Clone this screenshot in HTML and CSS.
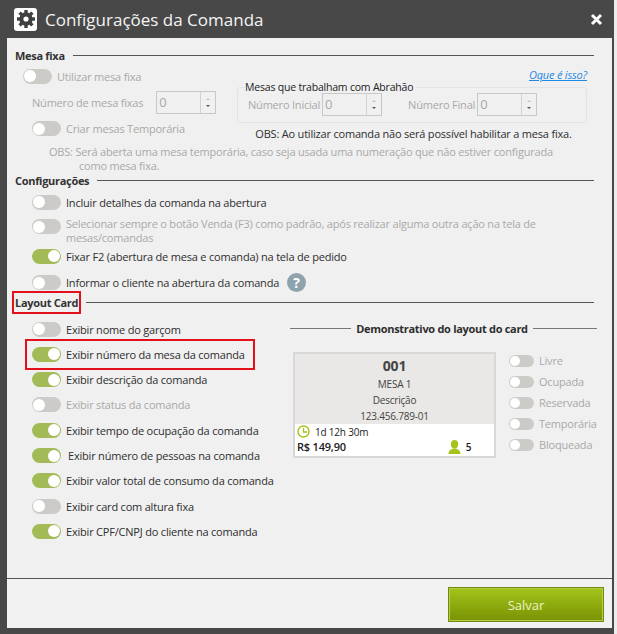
FILE: index.html
```html
<!DOCTYPE html>
<html lang="pt-BR">
<head>
    <meta charset="UTF-8">
    <meta name="viewport" content="width=device-width, initial-scale=1.0">
    <title>Configurações da Comanda</title>
    <link rel="stylesheet" href="styles.css">
</head>
<body>
    <div class="dialog">
        <div class="dialog-header">
            <span class="gear-box">
                <svg width="20" height="20" viewBox="0 0 20 20">
                    <g stroke="#3f3f3f" stroke-width="3.4">
                        <line x1="10" y1="1" x2="10" y2="19"/>
                        <line x1="1" y1="10" x2="19" y2="10"/>
                        <line x1="3.6" y1="3.6" x2="16.4" y2="16.4"/>
                        <line x1="16.4" y1="3.6" x2="3.6" y2="16.4"/>
                    </g>
                    <circle cx="10" cy="10" r="5" fill="none" stroke="#3f3f3f" stroke-width="3.4"/>
                    <circle cx="10" cy="10" r="2.6" fill="#fff"/>
                </svg>
            </span>
            <h1>Configurações da Comanda</h1>
            <svg class="close-icon" width="13" height="13" viewBox="0 0 13 13">
                <path d="M2 2 L11 11 M11 2 L2 11" stroke="#fff" stroke-width="3" fill="none"/>
            </svg>
        </div>

        <div class="dialog-body">
            <div class="section-title"><span>Mesa fixa</span></div>
            <div class="mesa-grid">
                <div class="mesa-left">
                    <div class="row row-first off-text">
                        <span class="toggle"></span>
                        <span>Utilizar mesa fixa</span>
                    </div>
                    <div class="field off-text">
                        <span>Número de mesa fixas</span>
                        <span class="spin"><span class="spin-value">0</span><span class="spin-arrows"><i class="up"></i><i class="down"></i></span></span>
                    </div>
                    <div class="row row-criar off-text">
                        <span class="toggle"></span>
                        <span>Criar mesas Temporária</span>
                    </div>
                </div>
                <div class="mesa-right">
                    <a class="help-link" href="#">Oque é isso?</a>
                    <fieldset class="range-box">
                        <legend>Mesas que trabalham com Abrahão</legend>
                        <div class="range-fields off-text">
                            <span>Número Inicial</span>
                            <span class="spin"><span class="spin-value">0</span><span class="spin-arrows"><i class="up"></i><i class="down"></i></span></span>
                            <span class="range-second">Número Final</span>
                            <span class="spin"><span class="spin-value">0</span><span class="spin-arrows"><i class="up"></i><i class="down"></i></span></span>
                        </div>
                    </fieldset>
                    <p class="obs-dark">OBS: Ao utilizar comanda não será possível habilitar a mesa fixa.</p>
                </div>
            </div>
            <p class="obs-light off-text">OBS: Será aberta uma mesa temporária, caso seja usada uma numeração que não estiver configurada como mesa fixa.</p>

            <div class="section-title"><span>Configurações</span></div>
            <div class="config-list">
                <div class="row row-short">
                    <span class="toggle"></span>
                    <span>Incluir detalhes da comanda na abertura</span>
                </div>
                <div class="row row-tall off-text">
                    <span class="toggle"></span>
                    <span class="wrap-label">Selecionar sempre o botão Venda (F3) como padrão, após realizar alguma outra ação na tela de mesas/comandas</span>
                </div>
                <div class="row">
                    <span class="toggle on"></span>
                    <span>Fixar F2 (abertura de mesa e comanda) na tela de pedido</span>
                </div>
                <div class="row row-help">
                    <span class="toggle"></span>
                    <span>Informar o cliente na abertura da comanda</span>
                    <span class="help-icon">?</span>
                </div>
            </div>

            <div class="section-title section-layout"><span class="marked">Layout Card</span></div>
            <div class="layout-grid">
                <div class="layout-list">
                    <div class="row">
                        <span class="toggle"></span>
                        <span>Exibir nome do garçom</span>
                    </div>
                    <div class="row row-marked">
                        <span class="toggle on"></span>
                        <span>Exibir número da mesa da comanda</span>
                    </div>
                    <div class="row">
                        <span class="toggle on"></span>
                        <span>Exibir descrição da comanda</span>
                    </div>
                    <div class="row off-text">
                        <span class="toggle"></span>
                        <span>Exibir status da comanda</span>
                    </div>
                    <div class="row">
                        <span class="toggle on"></span>
                        <span>Exibir tempo de ocupação da comanda</span>
                    </div>
                    <div class="row">
                        <span class="toggle on"></span>
                        <span class="nudge">Exibir número de pessoas na comanda</span>
                    </div>
                    <div class="row">
                        <span class="toggle on"></span>
                        <span>Exibir valor total de consumo da comanda</span>
                    </div>
                    <div class="row">
                        <span class="toggle"></span>
                        <span>Exibir card com altura fixa</span>
                    </div>
                    <div class="row">
                        <span class="toggle on"></span>
                        <span>Exibir CPF/CNPJ do cliente na comanda</span>
                    </div>
                </div>

                <div class="demo">
                    <div class="demo-title"><span>Demonstrativo do layout do card</span></div>
                    <div class="demo-content">
                        <div class="card">
                            <div class="card-top">
                                <div class="card-number">001</div>
                                <div>MESA 1</div>
                                <div>Descrição</div>
                                <div>123.456.789-01</div>
                            </div>
                            <div class="card-bottom">
                                <div class="card-time">
                                    <svg width="13" height="13" viewBox="0 0 13 13">
                                        <circle cx="6.5" cy="6.5" r="5.5" fill="none" stroke="#a4c31c" stroke-width="1.4"/>
                                        <path d="M6.5 3 V7 H10" fill="none" stroke="#a4c31c" stroke-width="1.3"/>
                                    </svg>
                                    <span>1d 12h 30m</span>
                                </div>
                                <div class="card-total">
                                    <span class="card-price">R$ 149,90</span>
                                    <span class="card-people">
                                        <svg width="13" height="14" viewBox="0 0 13 14">
                                            <ellipse cx="6.5" cy="4.2" rx="3.6" ry="4.2" fill="#a4c31c"/>
                                            <path d="M0.5 14 C0.5 10.5 3 9.6 5 8.6 H8 C10 9.6 12.5 10.5 12.5 14 Z" fill="#a4c31c"/>
                                        </svg>
                                        <span>5</span>
                                    </span>
                                </div>
                            </div>
                        </div>
                        <div class="status-list off-text">
                            <div class="status"><span class="toggle small"></span><span>Livre</span></div>
                            <div class="status"><span class="toggle small"></span><span>Ocupada</span></div>
                            <div class="status"><span class="toggle small"></span><span>Reservada</span></div>
                            <div class="status"><span class="toggle small"></span><span>Temporária</span></div>
                            <div class="status"><span class="toggle small"></span><span>Bloqueada</span></div>
                        </div>
                    </div>
                </div>
            </div>
        </div>

        <div class="dialog-footer">
            <button class="save-btn">Salvar</button>
        </div>
    </div>
</body>
</html>
```

FILE: styles.css
```css
* {
    margin: 0;
    padding: 0;
    box-sizing: border-box;
}

body {
    width: 617px;
    height: 634px;
    overflow: hidden;
    background: #ececec;
    font-family: "Open Sans", "Noto Sans", sans-serif;
    font-size: 11px;
    letter-spacing: -0.2px;
    color: #2e2e2e;
}

.dialog {
    width: 614px;
    height: 634px;
    background: #484848;
    padding: 0 2px 6px 7px;
    display: flex;
    flex-direction: column;
}

.dialog-header {
    height: 38px;
    display: flex;
    align-items: center;
    padding-left: 7px;
    flex-shrink: 0;
}

.gear-box {
    width: 23px;
    height: 23px;
    background: #fff;
    border-radius: 3px;
    display: flex;
    align-items: center;
    justify-content: center;
}

.dialog-header h1 {
    font-size: 17px;
    font-weight: 400;
    letter-spacing: 0;
    color: #f4f4f4;
    margin-left: 8px;
}

.close-icon {
    margin-left: auto;
    margin-right: 9px;
}

.dialog-body {
    flex: 1;
    background: #f0f0f0;
    padding: 9px 18px 0 8px;
    border-bottom: 1px solid #555;
}

.section-title {
    height: 16px;
    display: flex;
    align-items: center;
    font-weight: 700;
    letter-spacing: -0.3px;
    color: #333;
}

.section-title::after {
    content: "";
    flex: 1;
    border-top: 1px solid #555;
    margin-left: 8px;
}

.section-layout {
    margin-top: -2px;
}

.marked {
    padding: 1px 0;
    outline: 2px solid #e3101c;
    outline-offset: 1px;
}

.off-text {
    color: #a9a9a9;
}

.row {
    height: 25.4px;
    display: flex;
    align-items: center;
    gap: 5px;
    padding-left: 17px;
}

.toggle {
    width: 29px;
    height: 15px;
    border-radius: 8px;
    background: #cccbc8;
    flex-shrink: 0;
    display: flex;
    align-items: center;
    padding: 0 1px;
}

.toggle::after {
    content: "";
    width: 12px;
    height: 12px;
    border-radius: 50%;
    background: #fff;
}

.toggle.on {
    background: #a3bb56;
    justify-content: flex-end;
}

.toggle.small {
    width: 25px;
    height: 12px;
}

.toggle.small::after {
    width: 10px;
    height: 10px;
}

.mesa-grid {
    display: flex;
}

.mesa-left {
    width: 222px;
    flex-shrink: 0;
}

.mesa-left .row-first {
    padding-left: 8px;
    height: 26px;
}

.mesa-left .row-criar {
    height: 27px;
}

.field {
    height: 26px;
    display: flex;
    align-items: center;
    gap: 13px;
    padding-left: 17px;
}

.spin {
    width: 60px;
    height: 23px;
    border: 1px solid #c8c8c8;
    display: flex;
    font-size: 13px;
    color: #a8a8a8;
    flex-shrink: 0;
}

.spin-value {
    flex: 1;
    padding-left: 2px;
    line-height: 20px;
}

.spin-arrows {
    width: 15px;
    border-left: 1px solid #d2d2d2;
    display: flex;
    flex-direction: column;
    align-items: center;
    justify-content: center;
    gap: 5px;
}

.spin-arrows i {
    border-left: 2px solid transparent;
    border-right: 2px solid transparent;
}

.spin-arrows .up {
    border-bottom: 2px solid #c4c4c4;
}

.spin-arrows .down {
    border-top: 2px solid #555;
}

.mesa-right {
    flex: 1;
    display: flex;
    flex-direction: column;
    padding-right: 7px;
}

.help-link {
    align-self: flex-end;
    color: #1e88e5;
    font-style: italic;
    height: 14px;
    line-height: 14px;
    margin-top: 5px;
}

.range-box {
    border: 1px solid #e2e4e6;
    border-radius: 3px;
    height: 42px;
    padding: 0 10px;
    margin-top: -1px;
}

.range-box legend {
    color: #222;
    font-size: 10.5px;
    margin-left: -3px;
    padding-right: 3px;
    line-height: 12px;
}

.range-fields {
    display: flex;
    align-items: center;
    gap: 2px;
    height: 22px;
}

.range-second {
    margin-left: 24px;
}

.obs-dark {
    text-align: center;
    margin-top: 4px;
    padding-left: 3px;
    line-height: 14px;
}

.obs-light {
    margin-top: 3px;
    margin-bottom: -1px;
    padding-left: 64px;
    padding-right: 30px;
    text-indent: -30px;
    line-height: 14px;
}

.config-list {
    margin-top: 2px;
}

.row-short {
    height: 24.4px;
}

.layout-grid {
    display: flex;
    margin-top: 5.6px;
}

.row-tall {
    height: 29px;
    align-items: flex-start;
}

.row-tall .toggle {
    margin-top: 5px;
}

.wrap-label {
    padding-top: 3px;
    line-height: 14px;
    width: 515px;
}

.row-help {
    height: 28px;
}

.help-icon {
    width: 19px;
    height: 19px;
    margin-left: 3px;
    border-radius: 50%;
    background: #8fa3ae;
    color: #fff;
    font-weight: 700;
    font-size: 14px;
    text-align: center;
    line-height: 19px;
}

.layout-list {
    width: 275px;
    flex-shrink: 0;
}

.layout-list .row {
    height: 25.3px;
}

.layout-list .row-marked {
    width: fit-content;
    margin-left: 13px;
    padding: 0 7px 0 4px;
    outline: 2px solid #e3101c;
    outline-offset: 1px;
}

.nudge {
    margin-left: 2px;
}

.demo {
    flex: 1;
}

.demo-title {
    height: 25px;
    display: flex;
    align-items: center;
    font-weight: 700;
    letter-spacing: -0.3px;
    gap: 5px;
}

.demo-title::before {
    content: "";
    flex: 1;
    border-top: 1px solid #777;
}

.demo-title::after {
    content: "";
    width: 64px;
    border-top: 1px solid #777;
}

.demo-content {
    display: flex;
    padding-left: 3px;
    margin-top: 11px;
    gap: 13px;
}

.card {
    width: 203px;
    height: 106px;
    border: 2px solid #d8d8d8;
    display: flex;
    flex-direction: column;
    text-align: center;
    font-size: 10px;
    flex-shrink: 0;
    line-height: 16px;
    color: #444;
}

.card-top {
    flex: 1;
    background: #eae8e6;
    padding-top: 2px;
}

.card-number {
    font-size: 14px;
    font-weight: 700;
    line-height: 20px;
}

.card-bottom {
    height: 32px;
    background: #fff;
    text-align: left;
    padding-left: 2px;
    color: #222;
    flex-shrink: 0;
}

.card-time {
    display: flex;
    align-items: center;
    gap: 5px;
    height: 15px;
}

.card-total {
    display: flex;
    align-items: center;
    height: 16px;
}

.card-price {
    font-weight: 600;
    font-size: 11px;
}

.card-people {
    display: flex;
    align-items: center;
    gap: 5px;
    margin-left: 102px;
    font-weight: 600;
}

.status-list {
    margin-top: -2px;
}

.status {
    height: 21px;
    display: flex;
    align-items: center;
    gap: 5px;
}

.dialog-footer {
    height: 49px;
    flex-shrink: 0;
    background: #f2f2f2;
    padding: 9px 9px 0 0;
    display: flex;
    justify-content: flex-end;
}

.save-btn {
    width: 154px;
    height: 33px;
    background: linear-gradient(#a2c31a, #7a9404);
    border: 1px solid #b5cf4a;
    outline: 1px solid #6f8a10;
    color: #eef2c8;
    font-family: inherit;
    font-size: 13px;
}
```
